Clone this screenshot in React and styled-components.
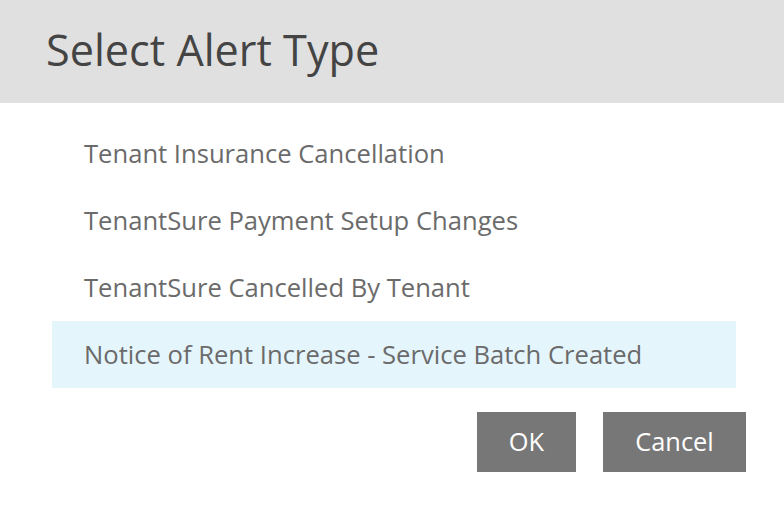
import React, { useState } from "react";
import styled, { createGlobalStyle } from "styled-components";

const GlobalStyle = createGlobalStyle`
  html, body {
    margin: 0;
    padding: 0;
    background: #fff;
    font-family: "Open Sans", "Liberation Sans", sans-serif;
  }
`;

const alertTypes = [
  "Tenant Insurance Cancellation",
  "TenantSure Payment Setup Changes",
  "TenantSure Cancelled By Tenant",
  "Notice of Rent Increase - Service Batch Created",
];

const App = () => {
  const [selected, setSelected] = useState(3);

  return (
    <Dialog>
      <GlobalStyle />
      <Header>
        <Title>Select Alert Type</Title>
      </Header>
      <List>
        {alertTypes.map((text, i) => (
          <Item key={text} active={i === selected} onClick={() => setSelected(i)}>
            {text}
          </Item>
        ))}
      </List>
      <Actions>
        <Button style={{ width: 99 }}>OK</Button>
        <Button style={{ width: 143 }}>Cancel</Button>
      </Actions>
    </Dialog>
  );
};

const Dialog = styled.div`
  width: 784px;
  height: 526px;
  background: #fff;
`;

const Header = styled.div`
  height: 103px;
  background: #e0e0e0;
  display: flex;
  align-items: center;
  padding-left: 46px;
  box-sizing: border-box;
`;

const Title = styled.h1`
  margin: 0;
  font-size: 43.2px;
  font-weight: 400;
  color: #444;
  padding-bottom: 4px;
  line-height: 1.2;
`;

const List = styled.ul`
  list-style: none;
  margin: 17px 48px 0 52px;
  padding: 0;
`;

const Item = styled.li`
  height: 67px;
  display: flex;
  align-items: center;
  padding-left: 32px;
  box-sizing: border-box;
  font-size: 25.6px;
  color: #6b6b6b;
  cursor: pointer;
  background: ${(p) => (p.active ? "#e5f5fc" : "transparent")};
`;

const Actions = styled.div`
  display: flex;
  justify-content: flex-end;
  gap: 27px;
  margin: 24px 38px 0 0;
`;

const Button = styled.button`
  height: 60px;
  border: none;
  background: #777;
  color: #fff;
  font-family: inherit;
  font-size: 25.4px;
  padding: 0 0 2px;
`;

export default App;
